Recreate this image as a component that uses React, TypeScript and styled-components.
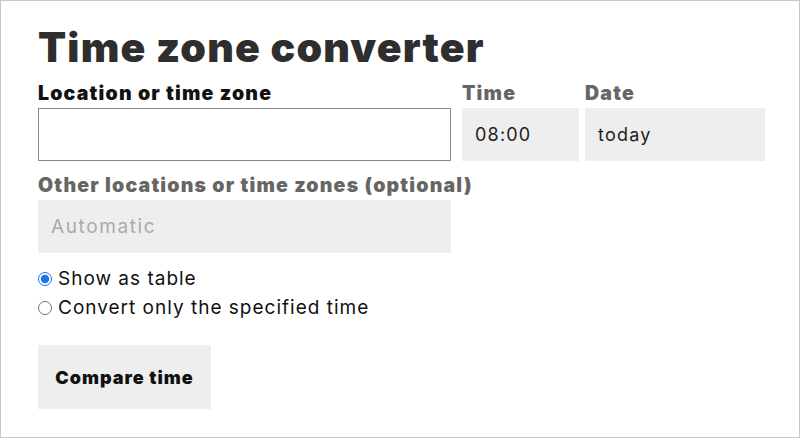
import React from 'react'
import styled, { createGlobalStyle } from 'styled-components'

const GlobalStyle = createGlobalStyle`
  html, body {
    margin: 0;
    padding: 0;
    background: #fff;
  }
  * {
    box-sizing: border-box;
  }
`

const App: React.FC = () => {
  return (
    <>
      <GlobalStyle />
      <Frame>
        <Title>Time zone converter</Title>
        <FieldRow>
          <Field $width={413}>
            <Label>Location or time zone</Label>
            <TextInput type="text" />
          </Field>
          <Field $width={117}>
            <Label $muted>Time</Label>
            <FilledBox>08:00</FilledBox>
          </Field>
          <Field $width={180}>
            <Label $muted>Date</Label>
            <FilledBox>today</FilledBox>
          </Field>
        </FieldRow>
        <OtherField $width={413}>
          <Label $muted>Other locations or time zones (optional)</Label>
          <FilledBox $placeholder>Automatic</FilledBox>
        </OtherField>
        <Options>
          <Option>
            <Radio type="radio" name="mode" defaultChecked />
            Show as table
          </Option>
          <Option>
            <Radio type="radio" name="mode" />
            Convert only the specified time
          </Option>
        </Options>
        <SubmitButton>Compare time</SubmitButton>
      </Frame>
    </>
  )
}

export default App

const Frame = styled.div`
  width: 800px;
  height: 438px;
  border: 1px solid #c8c8c8;
  padding: 22px 0 0 37px;
  font-family: Inter, "Liberation Sans", sans-serif;
  color: #111;
`

const Title = styled.h1`
  margin: 0;
  font-size: 41px;
  font-weight: 900;
  line-height: 48px;
  color: #2e2e2e;
  letter-spacing: 1.2px;
`

const FieldRow = styled.div`
  display: flex;
  margin-top: 11px;

  & > div + div {
    margin-left: 11px;
  }
  & > div:last-child {
    margin-left: 6px;
  }
`

const Field = styled.div<{ $width: number }>`
  display: flex;
  flex-direction: column;
  width: ${({ $width }) => $width}px;
  gap: 4px;
`

const OtherField = styled(Field)`
  margin-top: 13px;
`

const Label = styled.label<{ $muted?: boolean }>`
  font-size: 19.5px;
  font-weight: 900;
  line-height: 22px;
  letter-spacing: 1.2px;
  color: ${({ $muted }) => ($muted ? '#666' : '#111')};
  white-space: nowrap;
`

const TextInput = styled.input`
  height: 53px;
  width: 100%;
  border: 1px solid #8a8a8a;
  background: #fff;
  margin: 0;
  font-family: inherit;
`

const FilledBox = styled.div<{ $placeholder?: boolean }>`
  height: 53px;
  display: flex;
  align-items: center;
  padding-left: 13px;
  background: #eee;
  font-size: ${({ $placeholder }) => ($placeholder ? '19px' : '18px')};
  letter-spacing: ${({ $placeholder }) => ($placeholder ? '1.6px' : '1.2px')};
  color: ${({ $placeholder }) => ($placeholder ? '#aaa' : '#222')};
`

const Options = styled.div`
  display: flex;
  flex-direction: column;
  gap: 6px;
  margin-top: 14px;
`

const Option = styled.label`
  display: flex;
  align-items: center;
  gap: 6px;
  font-size: 19px;
  line-height: 23px;
  letter-spacing: 1px;
  color: #111;
`

const Radio = styled.input`
  width: 14px;
  height: 14px;
  margin: 0;
  accent-color: #1a73e8;
`

const SubmitButton = styled.button`
  margin-top: 26px;
  width: 173px;
  height: 64px;
  border: none;
  background: #eee;
  font-family: inherit;
  font-size: 18px;
  font-weight: 900;
  letter-spacing: 1px;
  color: #111;
  display: block;
`
